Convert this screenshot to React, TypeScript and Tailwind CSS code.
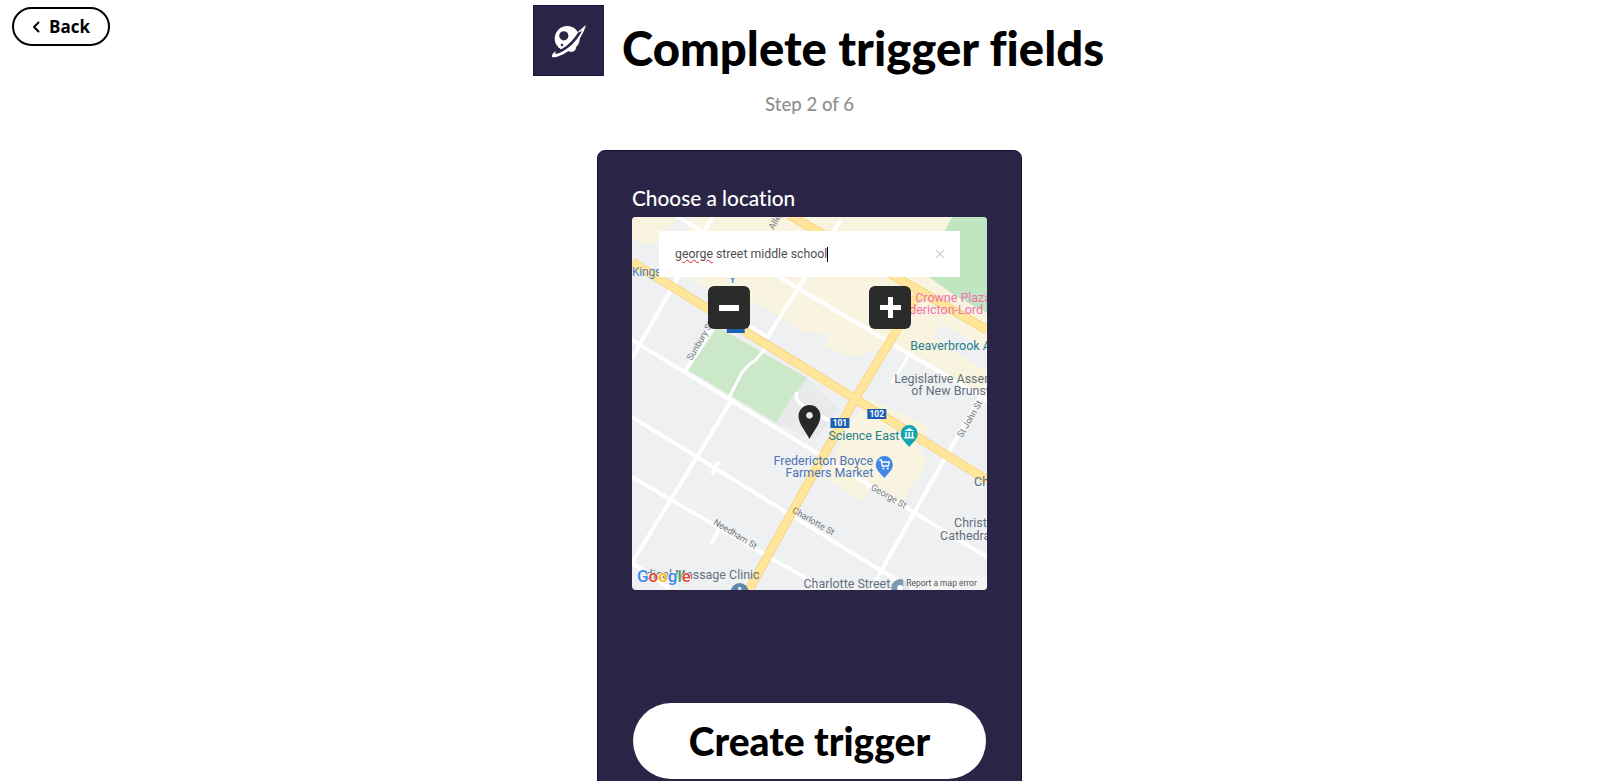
import React from "react";

const roads: [number, number, number, number, number][] = [
  [678, 217, 988, 400, 4],
  [632, 340, 988, 557, 4],
  [632, 417, 905, 585, 4],
  [632, 477, 830, 592, 4],
  [632, 358, 712, 218, 4],
  [685, 372, 727, 305, 4],
  [768, 337, 840, 222, 4],
  [735, 318, 768, 337, 4],
  [632, 563, 732, 400, 4],
  [632, 563, 668, 587, 4],
  [872, 588, 990, 381, 4],
  [713, 473, 718, 463, 4],
  [712, 543, 720, 528, 4],
  [882, 570, 915, 592, 4],
  [908, 358, 893, 382, 3],
];

function MapDrawing() {
  return (
    <svg viewBox="632 217 356 373" preserveAspectRatio="none" className="block w-full h-full">
      <rect x="632" y="217" width="356" height="373" fill="#eff0f2" />
      <polygon points="632,217 680,217 655,245 632,240" fill="#f8f4e0" />
      <polygon points="690,217 953,217 988,240 988,402 892,347 870,352 853,357 826,347 830,333 805,332 757,303 748,307 703,287 680,272" fill="#f8f4e0" />
      <polygon points="943,323 988,350 988,372 935,338" fill="#eff0f2" />
      <polygon points="872,400 932,427 918,443 928,463 902,503 872,487 863,502 825,478 848,425" fill="#f8f4e0" />
      <polygon points="953,217 988,217 988,313 955,295 930,277 935,250" fill="#bfe6c0" />
      <polygon points="688,370 718,327 808,378 777,423" fill="#cbe8c8" />
      <polygon points="777,423 790,400 808,378 840,410 815,440" fill="#e8eaec" />
      {roads.map(([a, b, c, d, w], i) => (
        <line key={i} x1={a} y1={b} x2={c} y2={d} stroke="#ffffff" strokeWidth={w} strokeLinecap="round" />
      ))}
      <path d="M728 400 L742 373 Q748 365 756 360 L766 348" fill="none" stroke="#fff" strokeWidth="3" />
      <path d="M797 392 Q795 400 803 405 L832 422" fill="none" stroke="#fff" strokeWidth="3.5" />
      <path d="M790 215 L988 330" stroke="#f9cf73" strokeWidth="9" fill="none" />
      <path d="M632 262 L988 480" stroke="#f9cf73" strokeWidth="9" fill="none" />
      <path d="M748 592 L855 400 L922 290" stroke="#f9cf73" strokeWidth="9" fill="none" />
      <path d="M790 215 L988 330" stroke="#ffe69a" strokeWidth="7.5" fill="none" />
      <path d="M632 262 L988 480" stroke="#ffe69a" strokeWidth="7.5" fill="none" />
      <path d="M748 592 L855 400 L922 290" stroke="#ffe69a" strokeWidth="7.5" fill="none" />

      <g fontFamily="Roboto, sans-serif">
        <text x="632" y="276" fontSize="12" letterSpacing="-0.2" fill="#4f7fb8">Kings</text>
        <text x="916" y="302" fontSize="12.5" fill="#f06fb0">Crowne Plaza</text>
        <text x="910" y="314" fontSize="12.5" fill="#f06fb0">dericton-Lord S</text>
        <text x="911" y="350" fontSize="12.5" fill="#26808c">Beaverbrook Art</text>
        <text x="895" y="383" fontSize="12.5" fill="#64707c">Legislative Assembly</text>
        <text x="912" y="395" fontSize="12.5" fill="#64707c">of New Brunswick</text>
        <text x="829" y="440" fontSize="12.5" fill="#26808c">Science East</text>
        <text x="774" y="465" fontSize="12.5" fill="#4f73b8">Fredericton Boyce</text>
        <text x="786" y="477" fontSize="12.5" fill="#4f73b8">Farmers Market</text>
        <text x="955" y="527" fontSize="12.5" fill="#64707c">Christ</text>
        <text x="941" y="540" fontSize="12.5" fill="#64707c">Cathedral</text>
        <text x="975" y="486" fontSize="12.5" fill="#4f7088">Ch</text>
        <text x="804" y="588" fontSize="12.5" fill="#64707c">Charlotte Street</text>
        <text x="760" y="579" fontSize="12.5" fill="#64707c" textAnchor="end">dical Massage Clinic</text>
        <text transform="translate(871 489) rotate(30)" fontSize="9" fill="#70767c">George St</text>
        <text transform="translate(792 512) rotate(30)" fontSize="9" fill="#70767c">Charlotte St</text>
        <text transform="translate(713 524) rotate(31)" fontSize="9" fill="#70767c">Needham St</text>
        <text transform="translate(692 361) rotate(-60)" fontSize="9" fill="#70767c">Sunbury St</text>
        <text transform="translate(963 438) rotate(-60)" fontSize="9" fill="#70767c">St John St</text>
        <text transform="translate(774 230) rotate(-60)" fontSize="9" fill="#70767c">Alley</text>
        <rect x="831" y="418" width="19" height="10" fill="#1a5fb4" />
        <text x="840.5" y="426" fontSize="8.5" fontWeight="700" fill="#fff" textAnchor="middle">101</text>
        <rect x="868" y="409" width="19" height="10" fill="#1a5fb4" />
        <text x="877.5" y="417" fontSize="8.5" fontWeight="700" fill="#fff" textAnchor="middle">102</text>
        <rect x="727" y="328" width="18" height="5" fill="#1a5fb4" />
      </g>
      <path d="M731 278h4l-1.2 2v3h-1.6v-3z" fill="#4a90e2" />

      <path d="M910 447 C905 441 901.5 439 901.5 433.5 a8.5 8.5 0 0 1 17 0 C918.5 439 915 441 910 447Z" fill="#12a5b5" />
      <path d="M905 437h10v1.5h-10z M906 432h1.5v5h-1.5z M909.2 432h1.5v5h-1.5z M912.5 432h1.5v5h-1.5z M905 431l5-3 5 3z" fill="#fff" />
      <path d="M885 478 C880 472 876.5 470 876.5 464.5 a8.5 8.5 0 0 1 17 0 C893.5 470 890 472 885 478Z" fill="#3f86e8" />
      <path d="M880 460h2l1 6h6l1-4h-7.5" fill="none" stroke="#fff" strokeWidth="1.3" />
      <circle cx="884" cy="468.5" r="1" fill="#fff" />
      <circle cx="888.5" cy="468.5" r="1" fill="#fff" />

      <circle cx="740" cy="592" r="9" fill="#5f87a8" />
      <rect x="738.5" y="587" width="3" height="3" fill="#dfe6ec" />
      <circle cx="901" cy="588" r="9" fill="#7d9cb4" />
      <circle cx="901" cy="588" r="3" fill="#fff" />

      <path fillRule="evenodd" d="M810 439 C806 431 799 424 799 416 a11 11 0 0 1 22 0 C821 424 814 431 810 439Z M810 412 a3.4 3.4 0 1 0 0.01 0Z" fill="#282828" />

      <rect x="904" y="576" width="84" height="14" fill="#f5f5f5" opacity="0.85" />
      <text x="907" y="586" fontSize="8.5" fill="#555" fontFamily="Roboto, sans-serif">Report a map error</text>
      <text x="637" y="582" fontSize="17" fontWeight="500" fontFamily="Roboto, sans-serif" stroke="#ffffff" strokeWidth="1" paintOrder="stroke">
        <tspan fill="#4285f4">G</tspan>
        <tspan fill="#ea4335">o</tspan>
        <tspan fill="#fbbc05">o</tspan>
        <tspan fill="#4285f4">g</tspan>
        <tspan fill="#34a853">l</tspan>
        <tspan fill="#ea4335">e</tspan>
      </text>
    </svg>
  );
}

export default function App() {
  return (
    <div className="h-screen overflow-hidden bg-white font-['Lato',sans-serif] [font-variant-ligatures:none]">
      <header className="flex items-start pl-3 pt-[5px]">
        <button className="mt-[2px] flex h-[39px] w-[98px] items-center justify-center gap-[9px] rounded-full border-2 border-black bg-white font-['Open_Sans',sans-serif] text-[17px] font-bold text-black">
          <svg width="8" height="12" viewBox="0 0 8 12" fill="none">
            <path d="M6.5 1.5 2 6l4.5 4.5" stroke="#000" strokeWidth="2" strokeLinecap="round" strokeLinejoin="round" />
          </svg>
          Back
        </button>
        <div className="ml-[423px] flex h-[71px] w-[71px] items-center justify-center border border-[#1b1744] bg-[#2a2546]">
          <svg width="36" height="36" viewBox="0 0 36 36">
            <circle cx="16.2" cy="15.5" r="12.5" fill="#fff" />
            <path d="M24 22 Q27 27 21 29 L16 28Z" fill="#fff" />
            <circle cx="12.8" cy="12.8" r="4.6" fill="#2a2546" />
            <circle cx="11" cy="22" r="1.2" fill="#2a2546" />
            <path d="M2 31 C11 29 22 22 31 6" fill="none" stroke="#2a2546" strokeWidth="3" />
            <path d="M1 34 C0.5 31.5 3 29 5 28 C4 29.5 4 30.5 5 31 C14 29 25 20 31 8 L26 10 C29 7 32 4 35 2 C32 12 26 22 16 29 C10 33 4 35 1 34Z" fill="#fff" />
          </svg>
        </div>
        <h1 className="ml-[18px] mt-[11px] text-[47.3px] leading-[64px] font-black text-black">Complete trigger fields</h1>
      </header>
      <p className="mt-[12px] pl-[19px] text-center text-[18.6px] leading-[24px] font-medium text-[#8f8f8f]">Step 2 of 6</p>
      <section className="ml-[597px] mt-[34px] h-[700px] w-[425px] rounded-t-lg border border-[#14112e] bg-[#2a2546] px-[34px] pt-[33px]">
        <label className="mb-[5px] block text-[20.8px] leading-[28px] font-medium text-white">Choose a location</label>
        <div className="relative h-[373px] w-[355px] overflow-hidden rounded-[4px]">
          <MapDrawing />
          <div className="absolute left-[27px] top-[14px] flex h-[46px] w-[301px] items-center bg-white pl-[16px] pr-[15px] font-['Roboto',sans-serif] text-[12.3px] text-[#505050]">
            <span className="underline decoration-wavy decoration-[#e02020] decoration-1">george</span>
            <span className="ml-[3px]">street middle school</span>
            <span className="h-[15px] w-px bg-black" />
            <svg className="ml-auto" width="10" height="10" viewBox="0 0 10 10">
              <path d="M1 1l8 8M9 1l-8 8" stroke="#d8d8d8" strokeWidth="1.5" />
            </svg>
          </div>
          <button className="absolute left-[76px] top-[69px] flex h-[43px] w-[42px] items-center justify-center rounded-[6px] bg-[#2b2b2b]">
            <span className="h-[6px] w-[20px] bg-white" />
          </button>
          <button className="absolute left-[237px] top-[69px] flex h-[43px] w-[42px] items-center justify-center rounded-[6px] bg-[#2b2b2b]">
            <svg width="21" height="21" viewBox="0 0 21 21"><path d="M8 0h5v8h8v5h-8v8H8v-8H0V8h8z" fill="#fff" /></svg>
          </button>
        </div>
        <button className="ml-px mt-[113px] h-[76px] w-[353px] rounded-full bg-white text-[39px] font-black text-black">Create trigger</button>
      </section>
    </div>
  );
}
